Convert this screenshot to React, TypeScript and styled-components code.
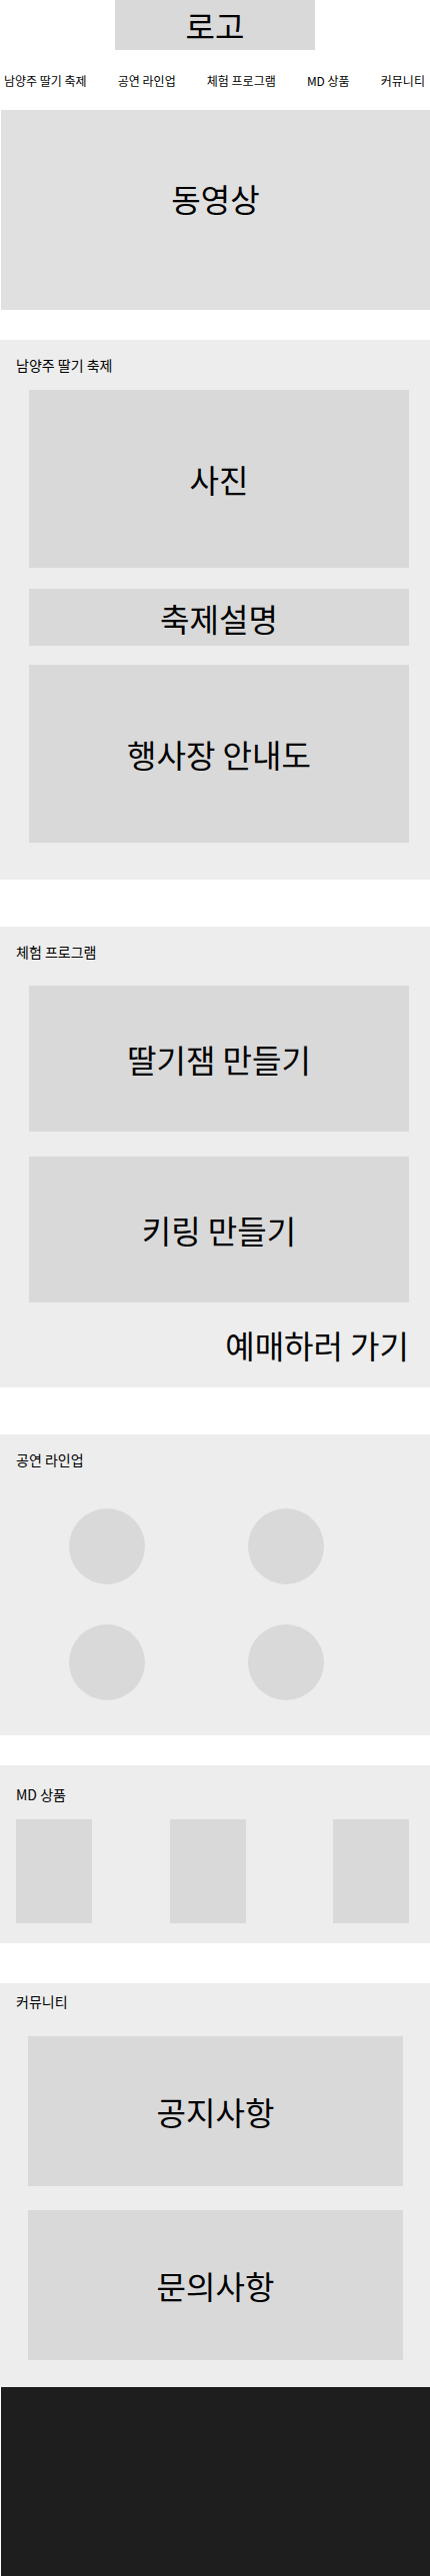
import React from 'react';
import styled, { createGlobalStyle } from 'styled-components';

const GlobalStyle = createGlobalStyle`
  body {
    margin: 0;
    background: #fff;
    font-family: "Noto Sans CJK KR", "Noto Sans", sans-serif;
    color: #000;
  }
`;

// --- Components ---
const Header = () => (
  <HeaderContainer>
    <Logo>로고</Logo>
    <Nav>
      <NavItem>남양주 딸기 축제</NavItem>
      <NavItem>공연 라인업</NavItem>
      <NavItem>체험 프로그램</NavItem>
      <NavItem>MD 상품</NavItem>
      <NavItem>커뮤니티</NavItem>
    </Nav>
  </HeaderContainer>
);

const App = () => {
  const lineup = [1, 2, 3, 4];
  const goods = [1, 2, 3];

  return (
    <Page>
      <GlobalStyle />
      <Header />
      <Video>동영상</Video>

      <Section $top={16} $bottom={37} $gapBefore={30}>
        <SectionTitle>남양주 딸기 축제</SectionTitle>
        <BoxList $top={15} $gap={21} $left={29} $right={21}>
          <Placeholder $h={178}>사진</Placeholder>
          <Placeholder $h={57}>축제설명</Placeholder>
        </BoxList>
        <BoxList $top={19} $gap={0} $left={29} $right={21}>
          <Placeholder $h={178}>행사장 안내도</Placeholder>
        </BoxList>
      </Section>

      <Section $top={16} $bottom={21} $gapBefore={47}>
        <SectionTitle>체험 프로그램</SectionTitle>
        <BoxList $top={24} $gap={25} $left={29} $right={21}>
          <Placeholder $h={146}>딸기잼 만들기</Placeholder>
          <Placeholder $h={146}>키링 만들기</Placeholder>
        </BoxList>
        <TicketLink>예매하러 가기</TicketLink>
      </Section>

      <Section $top={16} $bottom={35} $gapBefore={47}>
        <SectionTitle>공연 라인업</SectionTitle>
        <LineupGrid>
          {lineup.map((n) => (
            <Artist key={n} />
          ))}
        </LineupGrid>
      </Section>

      <Section $top={20} $bottom={20} $gapBefore={30}>
        <SectionTitle>MD 상품</SectionTitle>
        <GoodsRow>
          {goods.map((n) => (
            <GoodsItem key={n} />
          ))}
        </GoodsRow>
      </Section>

      <Section $top={9} $bottom={27} $gapBefore={40}>
        <SectionTitle>커뮤니티</SectionTitle>
        <BoxList $top={25} $gap={24} $left={28} $right={27}>
          <Placeholder $h={150}>공지사항</Placeholder>
          <Placeholder $h={150}>문의사항</Placeholder>
        </BoxList>
      </Section>

      <Footer />
    </Page>
  );
};

export default App;

// --- STYLES ---
const Page = styled.div`
  width: 430px;
  min-height: 2577px;
  display: flex;
  flex-direction: column;
`;

const HeaderContainer = styled.header`
  display: flex;
  flex-direction: column;
  align-items: center;
`;

const Logo = styled.div`
  width: 200px;
  height: 50px;
  background: #d9d9d9;
  display: flex;
  align-items: center;
  justify-content: center;
  font-size: 32px;
`;

const Nav = styled.nav`
  align-self: stretch;
  height: 60px;
  padding: 0 5px 0 4px;
  display: flex;
  align-items: center;
  justify-content: space-between;
`;

const NavItem = styled.span`
  font-size: 12px;
  white-space: nowrap;
`;

const Video = styled.div`
  height: 200px;
  margin-left: 1px;
  background: #e0e0e0;
  display: flex;
  align-items: center;
  justify-content: center;
  padding-bottom: 24px;
  box-sizing: border-box;
  font-size: 32px;
`;

const Section = styled.section<{ $top: number; $bottom: number; $gapBefore: number }>`
  margin-top: ${(p) => p.$gapBefore}px;
  padding: ${(p) => p.$top}px 0 ${(p) => p.$bottom}px;
  background: #ededed;
`;

const SectionTitle = styled.h2`
  margin: 0;
  padding-left: 16px;
  font-size: 14px;
  line-height: 19px;
  font-weight: 400;
`;

const BoxList = styled.div<{ $top: number; $gap: number; $left: number; $right: number }>`
  display: flex;
  flex-direction: column;
  gap: ${(p) => p.$gap}px;
  margin: ${(p) => p.$top}px ${(p) => p.$right}px 0 ${(p) => p.$left}px;
`;

const Placeholder = styled.div<{ $h: number }>`
  height: ${(p) => p.$h}px;
  background: #d9d9d9;
  display: flex;
  align-items: center;
  justify-content: center;
  font-size: 32px;
  white-space: nowrap;
`;

const TicketLink = styled.div`
  margin: 21px 21px 0 0;
  text-align: right;
  font-size: 32px;
  line-height: 43px;
`;

const LineupGrid = styled.div`
  display: grid;
  grid-template-columns: repeat(2, 76px);
  column-gap: 103px;
  row-gap: 40px;
  margin-top: 39px;
  padding-left: 69px;
`;

const Artist = styled.div`
  width: 76px;
  height: 76px;
  border-radius: 50%;
  background: #d9d9d9;
`;

const GoodsRow = styled.div`
  display: grid;
  grid-template-columns: 154px 163px 76px;
  margin-top: 15px;
  padding-left: 16px;
`;

const GoodsItem = styled.div`
  width: 76px;
  height: 104px;
  background: #d9d9d9;
`;

const Footer = styled.footer`
  flex: 1;
  min-height: 189px;
  margin-left: 1px;
  background: #1e1e1e;
`;
